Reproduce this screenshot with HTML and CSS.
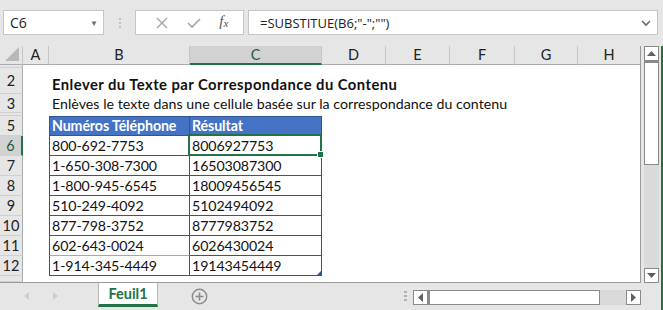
FILE: index.html
```html
<!DOCTYPE html>
<html lang="fr">
<head>
  <meta charset="UTF-8">
  <title>Feuil1</title>
  <link rel="stylesheet" href="styles.css">
</head>
<body>
  <div class="app">
    <div class="toolbar">
      <div class="namebox"><span>C6</span><span class="caret">&#9660;</span></div>
      <div class="grip"><i></i><i></i><i></i></div>
      <div class="fbuttons">
        <svg width="14" height="14" viewBox="0 0 14 14"><path d="M2 2 L12 12 M12 2 L2 12" stroke="#a6a6a6" stroke-width="1.4"/></svg>
        <svg width="16" height="14" viewBox="0 0 16 14"><path d="M2 7 L6 11 L14 3" stroke="#a6a6a6" stroke-width="1.6" fill="none"/></svg>
        <span class="fx">f<sub>x</sub></span>
      </div>
      <div class="formula"><span>=SUBSTITUE(B6;"-";"")</span>
        <svg width="10" height="8" viewBox="0 0 10 8"><path d="M1 2 L5 6 L9 2" stroke="#6d6d6d" stroke-width="1.6" fill="none"/></svg>
      </div>
    </div>

    <div class="main">
      <div class="sheet">
        <div class="row head">
          <div class="corner"><svg width="16" height="16" viewBox="0 0 16 16"><polygon points="15,1 15,15 1,15" fill="#b8b8b8"/></svg></div>
          <div class="ch">A</div><div class="ch">B</div><div class="ch sel">C</div><div class="ch">D</div>
          <div class="ch">E</div><div class="ch">F</div><div class="ch">G</div><div class="ch">H</div>
        </div>
        <div class="row r-tiny"><div class="rh"></div><div class="fill"></div></div>
        <div class="row r-title"><div class="rh">2</div><div></div><div class="cell title">Enlever du Texte par Correspondance du Contenu</div></div>
        <div class="row r-sub"><div class="rh">3</div><div></div><div class="cell sub">Enlèves le texte dans une cellule basée sur la correspondance du contenu</div></div>
        <div class="row r-tiny"><div class="rh"></div><div class="fill"></div></div>
        <div class="row r-std"><div class="rh">5</div><div></div><div class="cell tb th first">Numéros Téléphone</div><div class="cell tc th first">Résultat</div></div>
        <div class="row r-std"><div class="rh sel">6</div><div></div><div class="cell tb">800-692-7753</div><div class="cell tc active">8006927753</div></div>
        <div class="row r-std"><div class="rh">7</div><div></div><div class="cell tb">1-650-308-7300</div><div class="cell tc">16503087300</div></div>
        <div class="row r-std"><div class="rh">8</div><div></div><div class="cell tb">1-800-945-6545</div><div class="cell tc">18009456545</div></div>
        <div class="row r-std"><div class="rh">9</div><div></div><div class="cell tb">510-249-4092</div><div class="cell tc">5102494092</div></div>
        <div class="row r-std"><div class="rh">10</div><div></div><div class="cell tb">877-798-3752</div><div class="cell tc">8777983752</div></div>
        <div class="row r-std"><div class="rh">11</div><div></div><div class="cell tb light">602-643-0024</div><div class="cell tc">6026430024</div></div>
        <div class="row r-std"><div class="rh">12</div><div></div><div class="cell tb">1-914-345-4449</div><div class="cell tc last">19143454449</div></div>
        <div class="row r-end"><div class="rh"></div><div class="fill"></div></div>
      </div>
      <div class="vscroll">
        <div class="sbtn"><svg width="9" height="5" viewBox="0 0 9 5"><polygon points="0,5 9,5 4.5,0" fill="#606060"/></svg></div>
        <div class="vthumb"></div>
        <div class="track"></div>
        <div class="sbtn"><svg width="9" height="5" viewBox="0 0 9 5"><polygon points="0,0 9,0 4.5,5" fill="#606060"/></svg></div>
      </div>
      <div class="edge"></div>
    </div>

    <div class="tabs">
      <div class="nav">
        <svg width="6" height="8" viewBox="0 0 6 8"><polygon points="5,0 5,8 0,4" fill="#cdcdcd"/></svg>
        <svg width="6" height="8" viewBox="0 0 6 8"><polygon points="0,0 0,8 5,4" fill="#cdcdcd"/></svg>
      </div>
      <div class="tab">Feuil1</div>
      <svg class="plus" width="17" height="17" viewBox="0 0 17 17"><circle cx="8.5" cy="8.5" r="7.2" fill="none" stroke="#8a8a8a" stroke-width="1.4"/><path d="M8.5 4.5 V12.5 M4.5 8.5 H12.5" stroke="#8a8a8a" stroke-width="1.6"/></svg>
      <div class="spacer"></div>
      <div class="grip small"><i></i><i></i><i></i></div>
      <div class="hscroll">
        <div class="sbtn"><svg width="5" height="9" viewBox="0 0 5 9"><polygon points="5,0 5,9 0,4.5" fill="#606060"/></svg></div>
        <div class="hthumb"></div>
        <div class="track"></div>
        <div class="sbtn"><svg width="5" height="9" viewBox="0 0 5 9"><polygon points="0,0 0,9 5,4.5" fill="#606060"/></svg></div>
      </div>
    </div>
  </div>
</body>
</html>
```

FILE: styles.css
```css
body {
  margin: 0;
  background: #e6e6e6;
  font-family: "Lato", "Open Sans", sans-serif;
}

.app {
  width: 663px;
  height: 310px;
  display: flex;
  flex-direction: column;
  overflow: hidden;
}

/* formula bar */
.toolbar {
  height: 46px;
  box-sizing: border-box;
  padding-top: 10px;
  display: flex;
  align-items: flex-start;
}

.namebox {
  margin-left: 3px;
  width: 101px;
  height: 25px;
  box-sizing: border-box;
  background: #fff;
  border: 1px solid #c6c6c6;
  display: flex;
  align-items: center;
  justify-content: space-between;
  padding: 0 5px 0 6px;
  font: 14px "Open Sans", sans-serif;
  color: #222;
}

.namebox .caret {
  font-size: 8px;
  color: #6d6d6d;
}

.grip {
  width: 31px;
  height: 25px;
  display: flex;
  flex-direction: column;
  align-items: center;
  justify-content: center;
  gap: 2px;
}

.grip i {
  width: 2px;
  height: 2px;
  background: #c0c0c0;
}

.fbuttons {
  width: 109px;
  height: 25px;
  box-sizing: border-box;
  background: #fff;
  border: 1px solid #c6c6c6;
  display: flex;
  align-items: center;
  justify-content: space-around;
  padding: 0 6px 0 10px;
}

.fx {
  font: italic 15px "Liberation Serif", serif;
  color: #555;
  margin-top: -3px;
}

.fx sub {
  font-size: 11px;
  vertical-align: -1px;
}

.formula {
  margin-left: 4px;
  width: 410px;
  height: 25px;
  box-sizing: border-box;
  background: #fff;
  border: 1px solid #c6c6c6;
  display: flex;
  align-items: center;
  justify-content: space-between;
  padding: 0 6px 0 11px;
  font: 13px "Open Sans", sans-serif;
  color: #222;
}

/* grid */
.main {
  height: 237px;
  display: flex;
}

.sheet {
  width: 641px;
  box-sizing: border-box;
  background: #fff;
  border-right: 1px solid #9b9b9b;
  border-bottom: 1px solid #9b9b9b;
  font-size: 14.5px;
  color: #111;
}

.row {
  display: grid;
  grid-template-columns: 23px 26px 141px 132px 64px 64px 65px 63px 62px;
}

.row.head { height: 19px; }
.r-tiny { height: 3px; }
.r-title { height: 26px; }
.r-sub { height: 19px; }
.r-std { height: 20px; }
.r-end { height: 6px; }

.fill { grid-column: 2 / -1; }

.corner,
.ch,
.rh {
  background: #e6e6e6;
  box-sizing: border-box;
  color: #222;
}

.corner {
  border-right: 1px solid #c6c6c6;
  border-bottom: 1px solid #ababab;
  display: flex;
  align-items: flex-end;
  justify-content: flex-end;
  padding: 0 2px 2px 0;
}

.ch {
  border-right: 1px solid #c6c6c6;
  border-bottom: 1px solid #ababab;
  text-align: center;
  line-height: 18px;
}

.ch:last-child { border-right: none; }

.ch.sel {
  background: #d2d2d2;
  border-bottom: 2px solid #217346;
  color: #1e5a3a;
  line-height: 17px;
}

.rh {
  border-right: 1px solid #ababab;
  border-bottom: 1px solid #d0d0d0;
  display: flex;
  align-items: center;
  justify-content: center;
}

.rh.sel {
  background: #d2d2d2;
  border-right: 2px solid #217346;
  color: #1e5a3a;
}

.cell {
  box-sizing: border-box;
  white-space: nowrap;
  display: flex;
  align-items: flex-end;
  padding: 0 0 1px 3px;
  font-size: 14.2px;
  letter-spacing: -0.1px;
}

.title {
  font-weight: bold;
  font-size: 14.8px;
  letter-spacing: 0.45px;
}

.sub {
  letter-spacing: 0.02px;
}

/* table */
.tb {
  border-left: 1px solid #2f5597;
  border-right: 1px solid #2f5597;
  border-bottom: 1px solid #2f5597;
  padding-left: 2px;
}

.tb.light { border-bottom-color: #8eaadb; }

.tc {
  border-right: 1px solid #2f5597;
  border-bottom: 1px solid #2f5597;
  padding-left: 2px;
}

.th {
  background: #4472c4;
  color: #fff;
  font-weight: bold;
}

.first { border-top: 1px solid #2f5597; }

.active { position: relative; }

.active::after {
  content: "";
  position: absolute;
  left: -2px;
  top: -2px;
  right: -1px;
  bottom: -1px;
  border: 2px solid #217346;
}

.active::before {
  content: "";
  position: absolute;
  right: -3px;
  bottom: -3px;
  width: 5px;
  height: 5px;
  background: #217346;
  border: 1px solid #fff;
  z-index: 1;
}

.last { position: relative; }

.last::after {
  content: "";
  position: absolute;
  right: 0;
  bottom: 0;
  border-left: 4px solid transparent;
  border-bottom: 4px solid #2f5597;
}

/* scrollbars */
.vscroll {
  margin-left: 3px;
  width: 15px;
  display: flex;
  flex-direction: column;
}

.sbtn {
  box-sizing: border-box;
  background: #fff;
  border: 1px solid #8a8a8a;
  display: flex;
  align-items: center;
  justify-content: center;
}

.vscroll .sbtn { height: 15px; }

.vthumb {
  height: 104px;
  box-sizing: border-box;
  background: #fff;
  border: 1px solid #8a8a8a;
  border-top: 2px solid #8a8a8a;
}

.track {
  flex: 1;
  background: #dadada;
}

.edge {
  margin-left: 2px;
  width: 2px;
  background: #217346;
}

/* sheet tabs */
.tabs {
  height: 27px;
  display: flex;
  align-items: flex-start;
  position: relative;
}

.tabs::after {
  content: "";
  position: absolute;
  right: 0;
  top: 0;
  bottom: 0;
  width: 2px;
  background: #217346;
}

.nav {
  width: 98px;
  height: 26px;
  display: flex;
  align-items: center;
  gap: 23px;
  padding-left: 24px;
  box-sizing: border-box;
}

.tab {
  width: 60px;
  height: 24px;
  box-sizing: border-box;
  background: #fff;
  border-left: 1px solid #b8b8b8;
  border-right: 1px solid #b8b8b8;
  border-bottom: 3px solid #217346;
  color: #217346;
  font-weight: bold;
  font-size: 14.5px;
  text-align: center;
  line-height: 22px;
}

.plus {
  margin: 5px 0 0 33px;
}

.spacer { flex: 1; }

.grip.small {
  width: 16px;
  height: 27px;
  margin-top: -1px;
}

.grip.small i {
  width: 3px;
  height: 2px;
  background: #b0b0b0;
}

.hscroll {
  margin: 7px 22px 0 0;
  width: 228px;
  height: 15px;
  display: flex;
}

.hscroll .sbtn { width: 15px; }

.hthumb {
  width: 172px;
  box-sizing: border-box;
  background: #fff;
  border: 1px solid #8a8a8a;
  border-left: 2px solid #8a8a8a;
}
```
